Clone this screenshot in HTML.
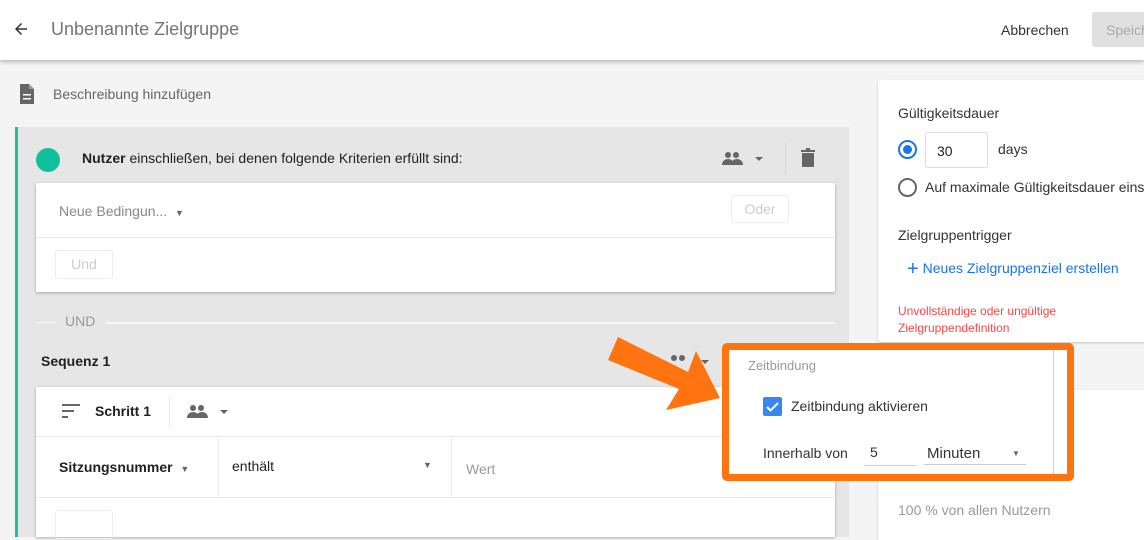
<!DOCTYPE html>
<html><head><meta charset="utf-8"><style>
*{box-sizing:border-box;margin:0;padding:0}
body{width:1144px;height:532px;overflow:hidden;background:#f4f4f4;font-family:"Liberation Sans",sans-serif;position:relative;color:#212121}
.a{position:absolute}
.hdr{left:0;top:0;width:1144px;height:60px;background:#fff;box-shadow:0 2px 4px rgba(0,0,0,.25)}
.gray{color:#9e9e9e}
</style></head><body>
<div class="a hdr">
 <svg class="a" style="left:12px;top:20px" width="18" height="18" viewBox="0 0 24 24"><path d="M20 11H7.8l5.6-5.6L12 4l-8 8 8 8 1.4-1.4L7.8 13H20z" fill="#333"/></svg>
 <div class="a" style="left:51px;top:19px;font-size:18px;color:#757575">Unbenannte Zielgruppe</div>
 <div class="a" style="left:1001px;top:22px;font-size:14px;color:#333">Abbrechen</div>
 <div class="a" style="left:1092px;top:12px;width:60px;height:35px;background:#e0e0e0;border-radius:3px;font-size:14px;color:#aaa;padding:10px 0 0 14px">Speichern</div>
</div>
<svg class="a" style="left:18px;top:84px" width="18" height="20" viewBox="0 0 18 20"><path d="M2 0h9l5 5v15H2z" fill="#666"/><path d="M11 0v5h5" fill="#999"/><rect x="5" y="10" width="8" height="1.5" fill="#fff"/><rect x="5" y="14" width="8" height="1.5" fill="#fff"/></svg>
<div class="a" style="left:53px;top:86px;font-size:14px;color:#666">Beschreibung hinzufügen</div>

<div class="a" style="left:15px;top:127px;width:834px;height:410px;background:#e6e6e6;border-left:3px solid #1fbfa0"></div>
<div class="a" style="left:36px;top:148px;width:24px;height:24px;border-radius:50%;background:#12bf9d"></div>
<div class="a" style="left:82px;top:150px;font-size:14px"><b>Nutzer</b> einschließen, bei denen folgende Kriterien erfüllt sind:</div>
<svg class="a" style="left:722px;top:150px" width="46" height="18" viewBox="0 0 46 18"><circle cx="6" cy="5" r="3" fill="#666"/><circle cx="14" cy="5" r="3" fill="#666"/><path d="M0 15c0-4 3-6 6-6s6 2 6 6zM9 15c0-4 3-6 6-6s6 2 6 6z" fill="#666"/><path d="M33 7h8l-4 4z" fill="#666"/></svg>
<div class="a" style="left:785px;top:143px;width:1px;height:32px;background:#d6d6d6"></div>
<svg class="a" style="left:801px;top:148px" width="14" height="19" viewBox="0 0 14 19"><rect x="0" y="2" width="14" height="2" fill="#666"/><rect x="5" y="0" width="4" height="2" fill="#666"/><rect x="1" y="5" width="12" height="14" fill="#666"/></svg>

<div class="a" style="left:36px;top:183px;width:799px;height:109px;background:#fff;border-radius:2px;box-shadow:0 1px 3px rgba(0,0,0,.3)">
 <div class="a" style="left:23px;top:20px;font-size:14px;color:#888">Neue Bedingun... &nbsp;<span style="font-size:9px;color:#666">▼</span></div>
 <div class="a" style="left:695px;top:12px;width:58px;height:28px;border:1px solid #eee;border-radius:3px;font-size:14px;color:#ccc;text-align:center;line-height:26px">Oder</div>
 <div class="a" style="left:0;top:54px;width:799px;height:1px;background:#e8e8e8"></div>
 <div class="a" style="left:19px;top:67px;width:58px;height:29px;border:1px solid #eee;border-radius:3px;font-size:14px;color:#ccc;text-align:center;line-height:27px">Und</div>
</div>
<div class="a" style="left:36px;top:322px;width:20px;height:1px;background:#f7f7f7"></div>
<div class="a" style="left:65px;top:313px;font-size:14px;color:#999">UND</div>
<div class="a" style="left:106px;top:322px;width:729px;height:2px;background:#f7f7f7"></div>
<div class="a" style="left:41px;top:353px;font-size:14px;font-weight:bold">Sequenz 1</div>
<svg class="a" style="left:668px;top:353px" width="46" height="18" viewBox="0 0 46 18"><circle cx="6" cy="5" r="3" fill="#666"/><circle cx="14" cy="5" r="3" fill="#666"/><path d="M33 7h8l-4 4z" fill="#666"/></svg>

<div class="a" style="left:36px;top:387px;width:799px;height:150px;background:#fff;box-shadow:0 1px 3px rgba(0,0,0,.3)">
 <svg class="a" style="left:26px;top:17px" width="18" height="14" viewBox="0 0 18 14"><rect y="0" width="18" height="2" fill="#666"/><rect y="6" width="12" height="2" fill="#666"/><rect y="12" width="6" height="2" fill="#666"/></svg>
 <div class="a" style="left:59px;top:16px;font-size:14px;font-weight:bold">Schritt 1</div>
 <div class="a" style="left:133px;top:10px;width:1px;height:30px;background:#e6e6e6"></div>
 <svg class="a" style="left:151px;top:16px" width="46" height="18" viewBox="0 0 46 18"><circle cx="6" cy="5" r="3" fill="#666"/><circle cx="14" cy="5" r="3" fill="#666"/><path d="M0 15c0-4 3-6 6-6s6 2 6 6zM9 15c0-4 3-6 6-6s6 2 6 6z" fill="#666"/><path d="M33 7h8l-4 4z" fill="#666"/></svg>
 <div class="a" style="left:0;top:49px;width:799px;height:1px;background:#e8e8e8"></div>
 <div class="a" style="left:23px;top:72px;font-size:14px;font-weight:bold">Sitzungsnummer &nbsp;<span style="font-size:9px;color:#666;font-weight:normal">▼</span></div>
 <div class="a" style="left:182px;top:50px;width:1px;height:60px;background:#ececec"></div>
 <div class="a" style="left:196px;top:71px;font-size:14px">enthält</div>
 <div class="a" style="left:387px;top:73px;font-size:9px;color:#666">▼</div>
 <div class="a" style="left:415px;top:50px;width:1px;height:60px;background:#ececec"></div>
 <div class="a" style="left:430px;top:74px;font-size:14px;color:#999">Wert</div>
 <div class="a" style="left:0;top:110px;width:799px;height:1px;background:#e8e8e8"></div>
 <div class="a" style="left:19px;top:123px;width:58px;height:29px;border:1px solid #eee;border-radius:3px"></div>
</div>

<div class="a" style="left:878px;top:80px;width:280px;height:262px;background:#fff;border-radius:3px;box-shadow:0 1px 2px rgba(0,0,0,.2)">
 <div class="a" style="left:20px;top:25px;font-size:14px;color:#333">Gültigkeitsdauer</div>
 <div class="a" style="left:20px;top:60px;width:19px;height:19px;border:2px solid #1a73e8;border-radius:50%"><div style="margin:3px;width:9px;height:9px;border-radius:50%;background:#1a73e8"></div></div>
 <div class="a" style="left:47px;top:52px;width:63px;height:36px;border:1px solid #ddd;border-radius:3px;font-size:14px;padding:10px 0 0 11px">30</div>
 <div class="a" style="left:120px;top:61px;font-size:14px;color:#333">days</div>
 <div class="a" style="left:20px;top:98px;width:19px;height:19px;border:2px solid #666;border-radius:50%"></div>
 <div class="a" style="left:47px;top:99px;font-size:14px;color:#333;white-space:nowrap">Auf maximale Gültigkeitsdauer einstellen</div>
 <div class="a" style="left:20px;top:147px;font-size:14px;color:#333">Zielgruppentrigger</div>
 <div class="a" style="left:29px;top:178px;font-size:14px;color:#1a73e8;white-space:nowrap"><span style="font-size:20px;vertical-align:-2px">+</span> Neues Zielgruppenziel erstellen</div>
 <div class="a" style="left:20px;top:223px;font-size:12px;color:#f44;line-height:17px">Unvollständige oder ungültige<br>Zielgruppendefinition</div>
</div>
<div class="a" style="left:878px;top:390px;width:280px;height:150px;background:#fff;box-shadow:0 1px 2px rgba(0,0,0,.2)">
 <div class="a" style="left:165px;top:50px;font-size:14px;color:#999">pe</div>
 <div class="a" style="left:20px;top:112px;font-size:14px;color:#999">100 % von allen Nutzern</div>
</div>

<div class="a" style="left:722px;top:343px;width:352px;height:138px;border:7px solid #ff7410;border-radius:5px;background:#fff">
 <div class="a" style="left:324px;top:0;width:1px;height:124px;background:#ccc"></div>
 <div class="a" style="left:19px;top:8px;font-size:13px;color:#999">Zeitbindung</div>
 <div class="a" style="left:34px;top:47px;width:19px;height:19px;background:#3a86f0;border-radius:2px"><svg width="19" height="19" viewBox="0 0 19 19"><path d="M4 10l3.5 3.5L15 6" stroke="#fff" stroke-width="2" fill="none"/></svg></div>
 <div class="a" style="left:62px;top:48px;font-size:14px;color:#333">Zeitbindung aktivieren</div>
 <div class="a" style="left:34px;top:95px;font-size:14px;color:#333">Innerhalb von</div>
 <div class="a" style="left:141px;top:94px;font-size:14px;color:#333">5</div>
 <div class="a" style="left:135px;top:115px;width:52px;height:1px;background:#ccc"></div>
 <div class="a" style="left:198px;top:95px;font-size:15px;color:#333">Minuten</div>
 <div class="a" style="left:283px;top:99px;font-size:8px;color:#666">▼</div>
 <div class="a" style="left:195px;top:114px;width:102px;height:1px;background:#ccc"></div>
</div>
<svg class="a" style="left:600px;top:330px" width="125" height="90" viewBox="0 0 125 90"><polygon points="18,7 88,42 96,21 120,68 66,80 79,59 8,30" fill="#ff7410"/></svg>
</body></html>
